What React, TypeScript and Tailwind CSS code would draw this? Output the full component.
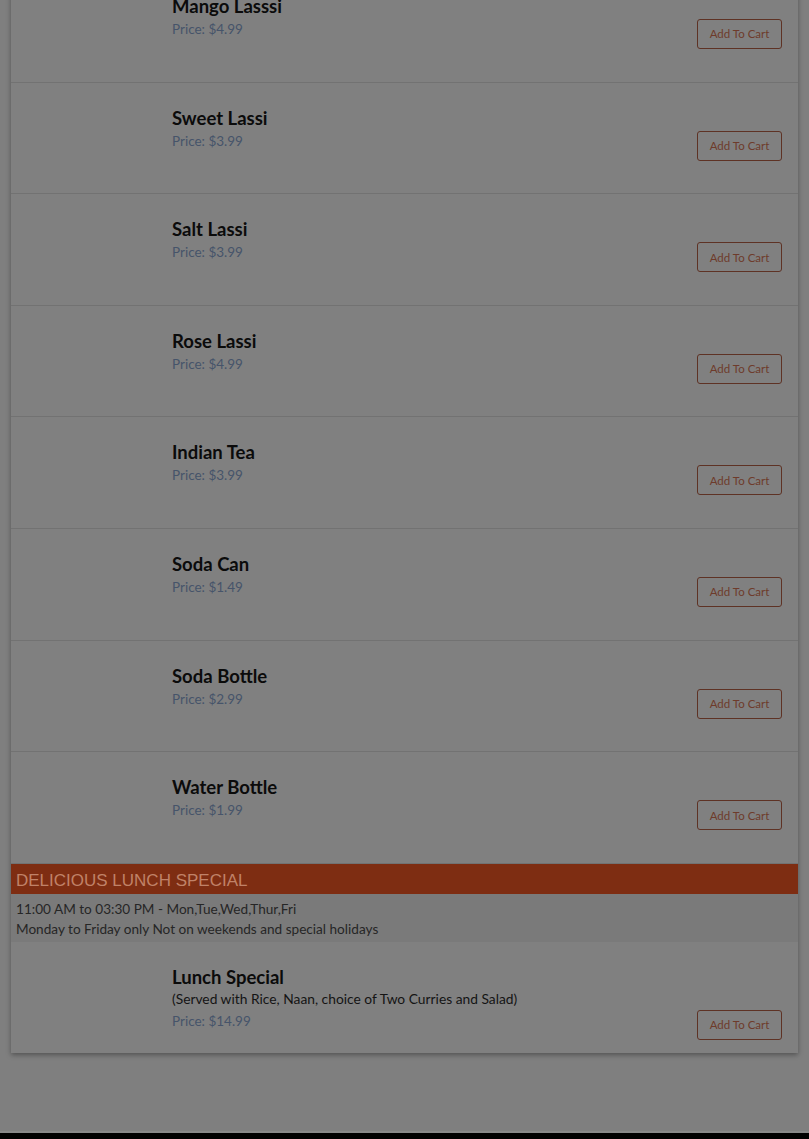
import React from 'react'

type Item = { name: string; price: string; note?: string }

const drinks: Item[] = [
  { name: 'Mango Lasssi', price: '$4.99' },
  { name: 'Sweet Lassi', price: '$3.99' },
  { name: 'Salt Lassi', price: '$3.99' },
  { name: 'Rose Lassi', price: '$4.99' },
  { name: 'Indian Tea', price: '$3.99' },
  { name: 'Soda Can', price: '$1.49' },
  { name: 'Soda Bottle', price: '$2.99' },
  { name: 'Water Bottle', price: '$1.99' },
]

function MenuRow({ item, last }: { item: Item; last?: boolean }) {
  return (
    <div className={`flex h-[111.6px] ${last ? '' : 'border-b border-[#727272]'}`}>
      {/* image slot, empty in this view */}
      <div className="w-[161px] shrink-0" />
      <div className="flex flex-1 justify-between pt-[24px] pr-[16px]">
        <div>
          <div className="text-[18.5px] leading-[22px] font-bold text-[#0b0b0b]">{item.name}</div>
          {item.note && (
            <div className="text-[13.8px] leading-[20px] text-[#141414] mt-[1px]">{item.note}</div>
          )}
          <div className="text-[13.5px] leading-[20px] text-[#46546a] mt-[2px]">Price: {item.price}</div>
        </div>
        <div className={item.note ? 'pt-[44px]' : 'pt-[24px]'}>
          <button className="h-[30px] w-[85px] rounded-[3px] border border-[#5e3224] text-[11.5px] text-[#6e3b2b] bg-transparent">
            Add To Cart
          </button>
        </div>
      </div>
    </div>
  )
}

export default function App() {
  return (
    <div
      className="min-h-[1139px] bg-[#7f7f7f] flex flex-col overflow-hidden"
      style={{ fontFamily: 'Lato, "Open Sans", sans-serif' }}
    >
      <div className="mx-[11px] -mt-[29px] bg-[#808080] shadow-[0_2px_5px_rgba(0,0,0,0.35)]">
        {drinks.map((d) => (
          <MenuRow key={d.name} item={d} />
        ))}

        <div className="bg-[#7e2d12] h-[30px] px-[5px] pt-[3px] flex items-center">
          <span
            className="text-[17px] text-[#c08268] uppercase"
            style={{ fontFamily: '"Liberation Sans", Arial, sans-serif' }}
          >
            Delicious Lunch Special
          </span>
        </div>
        <div className="bg-[#7a7a7a] px-[5px] pt-[5px] pb-[3px] text-[13.6px] leading-[20px] text-[#262626]">
          <div>11:00 AM to 03:30 PM - Mon,Tue,Wed,Thur,Fri</div>
          <div>Monday to Friday only Not on weekends and special holidays</div>
        </div>
        <MenuRow
          last
          item={{
            name: 'Lunch Special',
            price: '$14.99',
            note: '(Served with Rice, Naan, choice of Two Curries and Salad)',
          }}
        />
      </div>

      <div className="flex-1" />
      <div className="h-[2px] bg-[#888888]" />
      <div className="h-[6px] bg-black" />
    </div>
  )
}
